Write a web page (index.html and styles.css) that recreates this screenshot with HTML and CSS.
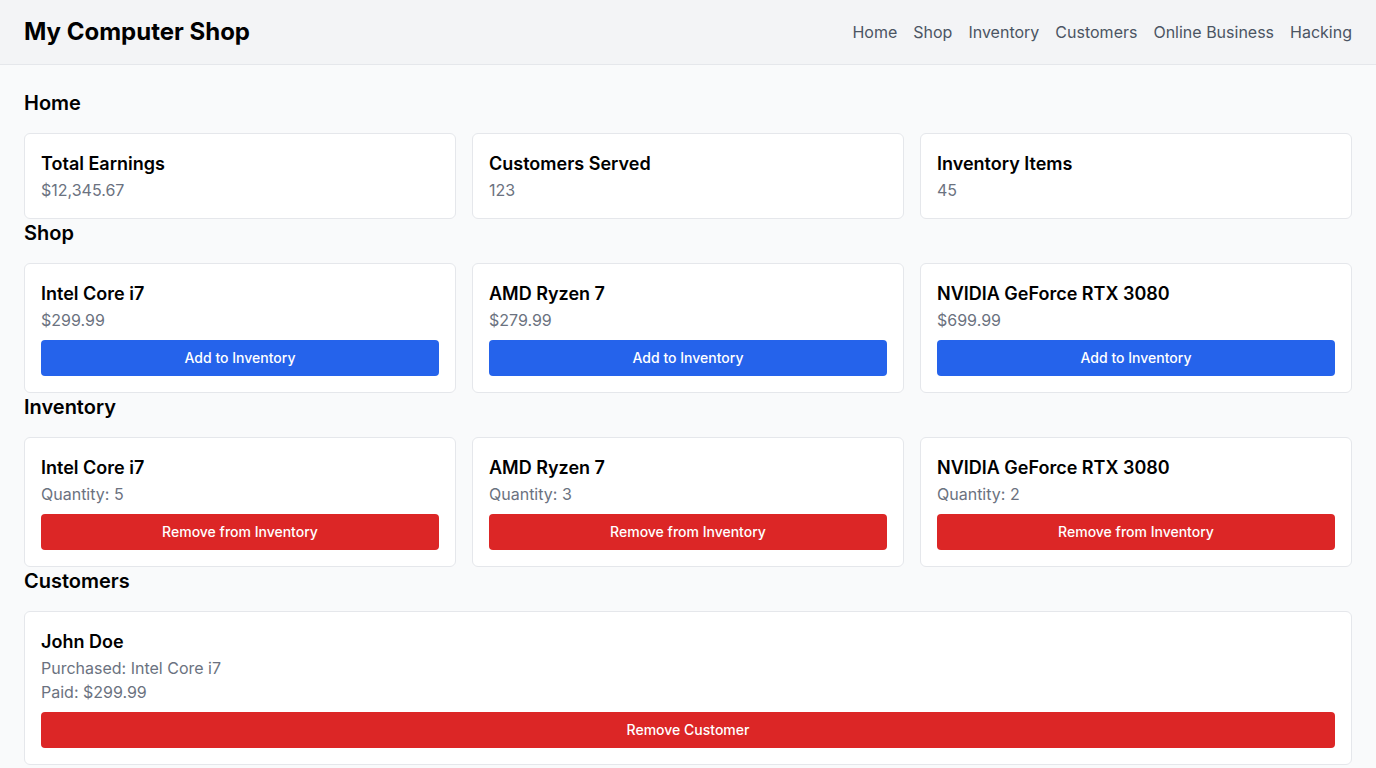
FILE: index.html
```html
<!DOCTYPE html>
<html lang="en">
<head>
<meta charset="utf-8">
<title>My Computer Shop</title>
<link rel="stylesheet" href="styles.css">
</head>
<body>
<header class="header">
  <h1 class="brand">My Computer Shop</h1>
  <nav class="nav">
    <a href="#">Home</a>
    <a href="#">Shop</a>
    <a href="#">Inventory</a>
    <a href="#">Customers</a>
    <a href="#">Online Business</a>
    <a href="#">Hacking</a>
  </nav>
</header>
<main class="main">
  <section>
    <h2 class="section-title">Home</h2>
    <div class="grid">
      <div class="card"><h3 class="card-title">Total Earnings</h3><p class="muted">$12,345.67</p></div>
      <div class="card"><h3 class="card-title">Customers Served</h3><p class="muted">123</p></div>
      <div class="card"><h3 class="card-title">Inventory Items</h3><p class="muted">45</p></div>
    </div>
  </section>
  <section>
    <h2 class="section-title">Shop</h2>
    <div class="grid">
      <div class="card"><h3 class="card-title">Intel Core i7</h3><p class="muted">$299.99</p><button class="btn btn-blue">Add to Inventory</button></div>
      <div class="card"><h3 class="card-title">AMD Ryzen 7</h3><p class="muted">$279.99</p><button class="btn btn-blue">Add to Inventory</button></div>
      <div class="card"><h3 class="card-title">NVIDIA GeForce RTX 3080</h3><p class="muted">$699.99</p><button class="btn btn-blue">Add to Inventory</button></div>
    </div>
  </section>
  <section>
    <h2 class="section-title">Inventory</h2>
    <div class="grid">
      <div class="card"><h3 class="card-title">Intel Core i7</h3><p class="muted">Quantity: 5</p><button class="btn btn-red">Remove from Inventory</button></div>
      <div class="card"><h3 class="card-title">AMD Ryzen 7</h3><p class="muted">Quantity: 3</p><button class="btn btn-red">Remove from Inventory</button></div>
      <div class="card"><h3 class="card-title">NVIDIA GeForce RTX 3080</h3><p class="muted">Quantity: 2</p><button class="btn btn-red">Remove from Inventory</button></div>
    </div>
  </section>
  <section>
    <h2 class="section-title">Customers</h2>
    <div class="stack">
      <div class="card"><h3 class="card-title">John Doe</h3><p class="muted">Purchased: Intel Core i7</p><p class="muted">Paid: $299.99</p><button class="btn btn-red">Remove Customer</button></div>
    </div>
  </section>
</main>
</body>
</html>
```
FILE: styles.css
```css
* { box-sizing: border-box; }
html, body { margin: 0; padding: 0; }
body {
  font-family: Inter, "Noto Sans", sans-serif;
  background: #f9fafb;
  color: #000;
}
h1, h2, h3, p { margin: 0; }
.header {
  display: flex;
  justify-content: space-between;
  align-items: center;
  padding: 16px 24px;
  background: #f3f4f6;
  border-bottom: 1px solid #e5e7eb;
}
.brand {
  font-size: 24px;
  line-height: 32px;
  font-weight: 700;
}
.nav {
  display: flex;
  gap: 16px;
}
.nav a {
  color: #4b5563;
  text-decoration: none;
  font-size: 16px;
  line-height: 24px;
}
.main {
  padding: 24px;
}
.section-title {
  font-size: 20px;
  line-height: 28px;
  font-weight: 600;
  margin-bottom: 16px;
}
.grid {
  display: grid;
  grid-template-columns: repeat(3, 1fr);
  gap: 16px;
}
.stack {
  display: flex;
  flex-direction: column;
  gap: 16px;
}
.card {
  background: #fff;
  border: 1px solid #e5e7eb;
  border-radius: 6px;
  padding: 16px;
}
.card-title {
  font-size: 18px;
  line-height: 28px;
  font-weight: 600;
}
.muted {
  color: #6b7280;
  font-size: 16px;
  line-height: 24px;
}
.btn {
  display: block;
  width: 100%;
  margin-top: 8px;
  padding: 8px 16px;
  border: none;
  border-radius: 4px;
  color: #fff;
  font-family: inherit;
  font-size: 14px;
  line-height: 20px;
  font-weight: 500;
  cursor: pointer;
}
.btn-blue { background: #2563eb; }
.btn-red { background: #dc2626; }
```
